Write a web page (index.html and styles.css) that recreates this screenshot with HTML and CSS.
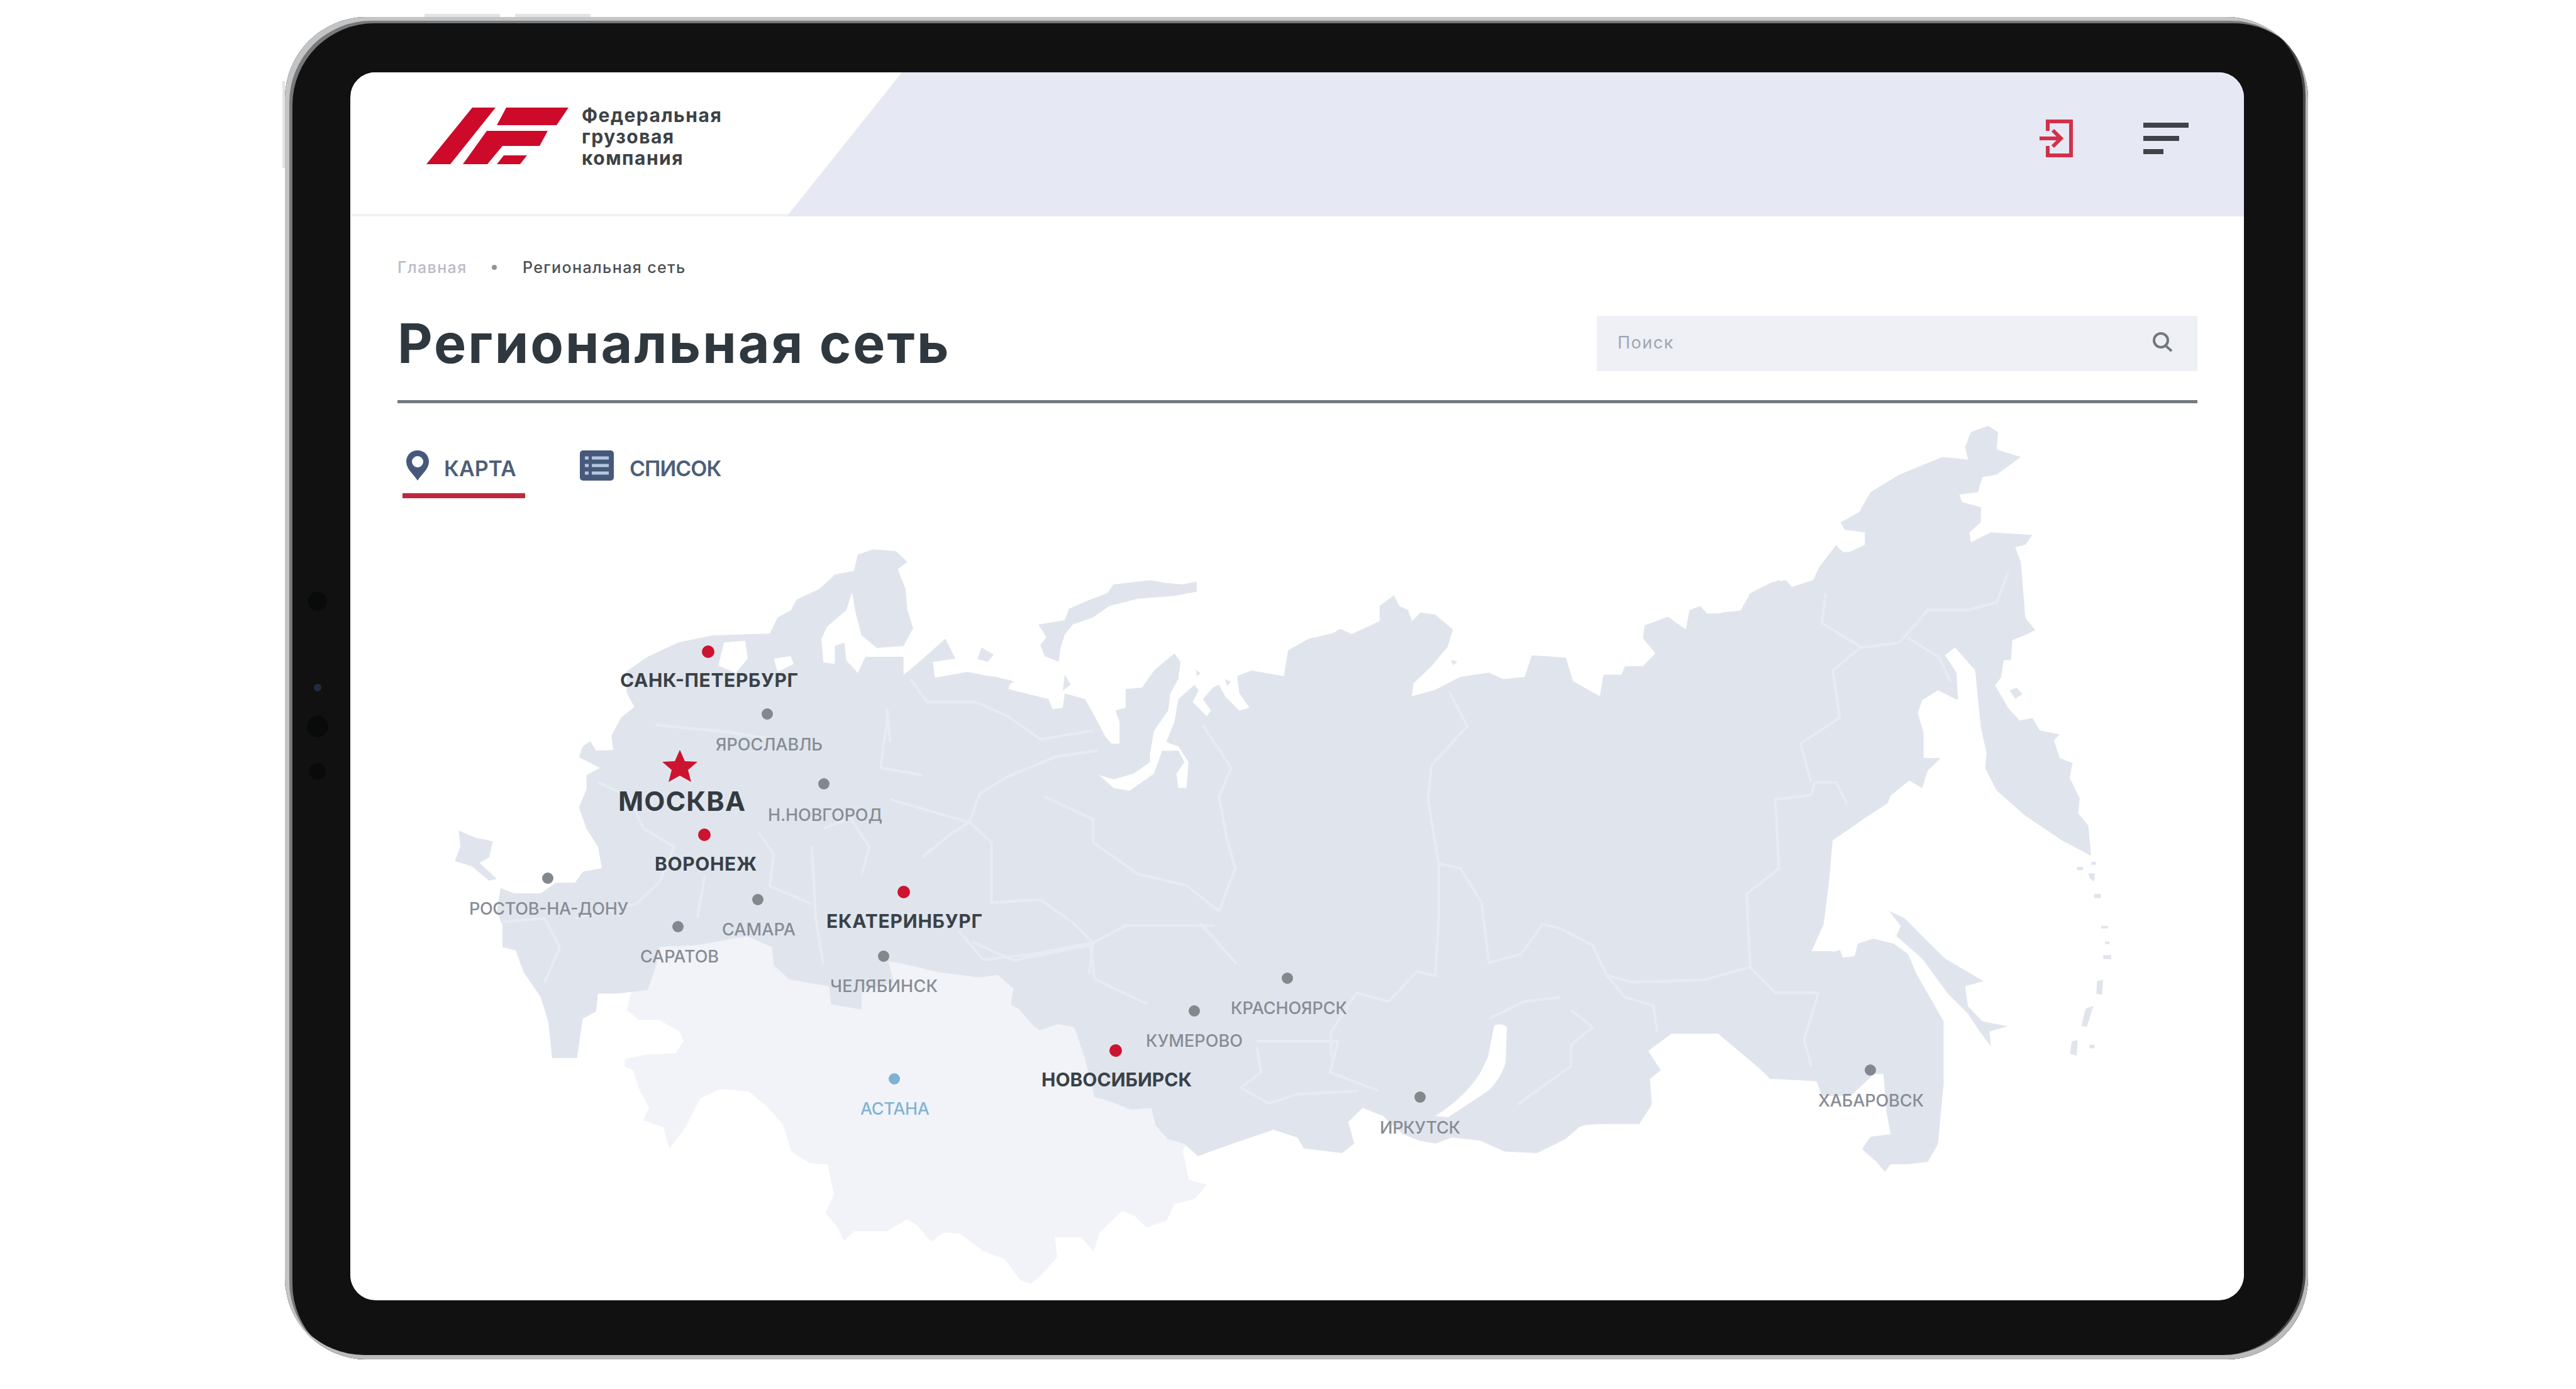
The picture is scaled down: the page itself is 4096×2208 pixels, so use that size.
FILE: index.html
```html
<!DOCTYPE html>
<html lang="ru">
<head>
<meta charset="utf-8">
<title>Региональная сеть</title>
<link rel="stylesheet" href="styles.css">
</head>
<body>
<div class="tablet">
  <span class="side-key side-key-left"></span>
  <span class="side-key side-key-top1"></span>
  <span class="side-key side-key-top2"></span>
  <span class="sensor sensor-a"></span>
  <span class="sensor sensor-lens"></span>
  <span class="sensor sensor-b"></span>
  <span class="sensor sensor-c"></span>
  <div class="screen">
    <header class="header">
      <div class="brand">
        <svg class="brand-mark" viewBox="0 0 226 92" width="226" height="92">
          <path d="M73 1H110L38 91H0ZM127 1H226L207 29H112ZM96 38H193L180 62H121L97 91H58ZM123 77H160L149 91H112Z"/>
        </svg>
        <div class="brand-name">Федеральная<br>грузовая<br>компания</div>
      </div>
      <div class="header-tools">
        <svg class="icon-login" viewBox="0 0 56 62" width="56" height="62">
          <path d="M15 19V4H52V58H15V43M2 31H35M23 18L36 31L23 44"/>
        </svg>
        <div class="burger"><i class="burger-l"></i><i class="burger-m"></i><i class="burger-s"></i></div>
      </div>
    </header>
    <div class="page-head">
      <nav class="crumbs"><span class="crumb-home">Главная</span><i class="crumb-dot"></i><span class="crumb-current">Региональная сеть</span></nav>
      <div class="title-row">
        <h1 class="title">Региональная сеть</h1>
        <div class="search">
          <span class="search-hint">Поиск</span>
          <svg viewBox="0 0 36 32" width="36" height="32"><path d="M24 22L33 30M27 13A11 11 0 1 1 5 13A11 11 0 1 1 27 13Z"/></svg>
        </div>
      </div>
    </div>
    <section class="map">
      <svg class="map-canvas" viewBox="558 641 3009 1427">
        <g class="neighbour" transform="matrix(.6454 0 0 .3797 952.5 1488.3)">
          <path d="M80 240L70 310 100 350 150 350 200 400 210 440 190 490 120 495 65 515 65 545 85 560 100 640 125 720 110 770 160 800 175 890 215 800 250 680 300 640 370 650 420 720 455 790 475 900 520 950 565 955 580 1080 560 1160 590 1220 605 1275 630 1235 710 1235 760 1185 785 1210 820 1280 850 1240 890 1245 950 1320 1000 1350 1040 1440 1065 1455 1090 1420 1130 1345 1125 1260 1190 1260 1220 1320 1235 1240 1290 1150 1320 1170 1350 1220 1400 1190 1420 1120 1470 1100 1500 1040 1455 1020 1440 900 1450 860 1400 500 1100 200 900 100 600 -20 130 -20Z"/>
        </g>
        <g class="land">
          <g transform="matrix(.6074 0 0 .5695 684.6 833.4)">
            <path d="M320 1490L310 1390 290 1320 245 1250 225 1190 190 1180 190 1120 175 1080 185 1015 220 1030 290 1030 330 1000 380 1000 400 970 450 960 440 900 410 850 390 790 410 740 410 700 445 680 390 650 400 620 420 605 435 632 480 630 475 590 500 540 535 510 515 470 515 410 570 370 650 330 740 310 890 305 910 260 945 240 960 210 1020 180 1060 140 1110 130 1120 85 1160 70 1220 75 1250 105 1225 125 1245 180 1250 240 1265 290 1240 340 1170 345 1130 310 1115 250 1105 190 1090 240 1040 285 1025 320 1030 385 1060 390 1060 340 1085 330 1090 380 1120 415 1140 370 1240 370 1240 420 1270 410 1300 370 1350 320 1375 375 1310 385 1310 440 1380 420 1480 425 1530 440 1500 450 1568 490 1568 1370 1520 1340 1535 1295 1500 1255 1440 1265 1330 1250 1230 1225 1200 1220 1215 1280 1130 1300 1130 1355 1050 1340 1045 1290 940 1270 900 1230 895 1180 830 1150 700 1175 600 1180 590 1240 570 1300 490 1310 440 1310 435 1360 400 1380 385 1490Z"/>
            <path d="M75 855L120 875 165 885 155 930 130 945 175 990 155 995 110 955 65 940 80 900Z"/>
            <path class="water" d="M770 330L825 325 832 375 800 415 755 395ZM900 375L945 368 952 390 910 412Z"/>
          </g>
          <g transform="matrix(.6454 0 0 .4556 1190.6 833.4)">
            <path d="M380 530L430 470 485 400 510 465 455 480 460 535 540 515 650 545 640 575 740 610 750 645 775 640 780 590 830 610 850 660 880 740 895 765 915 765 915 690 905 650 930 640 930 575 970 570 1000 510 1050 450 1065 480 1060 540 1040 590 1035 650 1000 720 990 800 990 830 950 870 900 890 865 875 900 920 940 930 1000 870 1020 790 1060 790 1075 830 1055 870 1060 920 1080 920 1085 830 1060 775 1030 760 1050 690 1060 610 1100 560 1110 580 1095 620 1130 670 1140 650 1120 610 1145 570 1160 560 1175 600 1210 650 1235 640 1210 590 1205 530 1240 510 1320 530 1330 440 1380 400 1440 380 1460 365 1490 385 1568 350 1568 1568 700 1545 350 1500 100 1500 100 600Z"/>
            <path d="M575 430L605 455 590 480 565 470ZM780 525L795 560 775 580ZM1175 540L1190 550 1180 565ZM1103 508L1115 520 1105 530ZM765 480L730 460 720 420 735 395 715 350 780 335 790 295 830 270 885 240 900 210 990 195 1030 205 1070 210 1105 200 1105 235 1050 250 960 260 890 285 850 325 800 350 780 385 770 430Z"/>
          </g>
          <g transform="matrix(.6454 0 0 .4936 1547.8 1309.7)">
            <path d="M0 495L60 485 100 530 95 570 150 650 165 665 210 645 250 655 275 750 300 880 330 890 390 920 440 915 450 970 480 1015 520 1030 555 1070 640 1030 740 985 800 1010 815 1045 910 1060 940 1030 925 960 960 915 1010 940 1060 1000 1100 1020 1140 1030 1180 1010 1250 1020 1310 1055 1390 1060 1460 1015 1500 970 1568 965 1568 0 0 0Z"/>
          </g>
          <g transform="matrix(.5695 0 0 .6834 2083.6 833.4)">
            <path d="M0 265L60 260 80 245 110 258 170 235 195 225 195 190 235 165 250 190 275 200 285 225 310 205 350 210 400 245 385 285 340 330 290 370 285 400 350 385 420 355 500 345 540 360 600 355 620 305 715 310 735 365 810 400 820 350 870 350 880 330 930 330 965 300 930 265 935 235 1000 215 1050 245 1060 200 1090 190 1110 208 1200 205 1230 160 1290 135 1330 130 1355 155 1400 145 1420 105 1470 50 1490 65 1568 60 1568 670 1500 700 1460 735 1450 830 1435 930 1400 995 1440 1000 1480 990 1490 1010 1520 1005 1540 975 1568 965 1568 1285 1510 1330 1430 1330 1415 1295 1290 1290 1240 1255 1140 1185 1010 1185 945 1225 980 1270 950 1290 955 1350 920 1395 850 1395 780 1395 740 1405 690 1440 640 1460 550 1455 540 1300 0 1300ZM395 315L412 320 400 328Z"/>
          </g>
          <g transform="matrix(.4556 0 0 .7973 2738.4 654.8)">
            <path d="M0 400L80 395 110 360 200 335 240 350 320 335 340 310 400 265 425 285 500 265 500 240 430 235 415 220 480 200 520 160 620 125 770 90 860 95 850 70 870 40 930 28 965 40 960 75 1045 90 960 125 910 130 895 160 830 165 840 180 905 190 905 220 865 240 870 260 940 240 1085 245 1060 265 1025 270 1045 300 1060 410 1095 435 1060 445 1015 455 1010 495 985 495 975 530 955 545 1000 590 1040 615 1085 610 1110 635 1180 643 1160 655 1180 690 1225 700 1215 730 1250 770 1245 800 1280 825 1290 885 1190 855 1060 805 960 755 920 710 925 680 905 630 885 515 815 470 780 485 820 520 825 575 755 555 700 575 685 600 705 640 705 690 765 690 720 715 700 750 655 735 590 765 580 780 500 810 450 830 385 855 380 900 360 1000 310 1075 390 1075 400 1090 465 1085 475 1060 530 1050 600 1060 650 1080 680 1120 720 1160 775 1215 775 1340 755 1460 720 1495 650 1500 590 1500 570 1515 540 1495 490 1470 520 1445 590 1440 575 1395 565 1320 470 1320 440 1365 370 1355 340 1335 240 1330 170 1330 100 1290 0 1240Z"/>
            <path d="M585 995L640 1010 700 1045 780 1090 915 1135 850 1145 860 1185 910 1215 1000 1225 935 1235 940 1265 900 1235 860 1200 790 1160 700 1090 610 1045 625 1025Z"/>
            <path d="M1005 555L1030 550 1050 562 1025 572ZM1240 907L1262 907 1262 914 1240 914ZM1290 897L1306 897 1306 903 1290 903ZM1280 920L1304 920 1300 936 1284 930ZM1300 961L1324 961 1324 969 1300 969ZM1325 1025L1348 1025 1348 1030 1325 1030ZM1338 1056L1354 1056 1354 1061 1338 1061ZM1332 1083L1360 1083 1360 1091 1332 1091ZM1310 1135L1332 1132 1328 1162 1308 1160ZM1270 1190L1298 1184 1275 1226 1256 1224ZM1222 1255L1242 1252 1240 1284 1216 1280ZM1284 1262L1302 1262 1302 1269 1284 1269Z"/>
          </g>
        </g>
        <path class="water" d="M2377 1630Q2390 1626 2397 1633L2395 1690Q2385 1718 2367 1734L2322 1764 2303 1776 2283 1774Q2330 1745 2355 1705L2367 1680Z"/>
        <g class="borders">
          <path transform="matrix(.6074 0 0 .5695 684.6 833.4)" d="M590 560L780 580 900 600M860 860L900 920 890 1010 1000 1060M560 850L640 900 600 1000 540 1060 380 1100M720 980L700 1100M1000 900L1010 1100 1030 1230M1200 520L1180 680 1290 700M190 1110L300 1100 340 1180 300 1280M440 720L520 760 560 850M1030 850L1100 820 1150 900 1130 980"/>
          <path transform="matrix(.6454 0 0 .4556 1190.6 833.4)" d="M400 540L440 620 560 620 640 670 720 750 850 720M860 790L760 810 640 880 570 940 545 1040 500 1080 430 1160M350 960L545 1040 600 1110 600 1320 720 1310 800 1390 850 1460 930 1400 1150 1400M730 950L850 1030 850 1110 960 1220 1080 1260 1160 1350M1120 700L1190 850 1160 950 1180 1100 1200 1200 1160 1350M340 640L350 760M520 1420L580 1520 700 1500 850 1460 840 1568"/>
          <path transform="matrix(.6454 0 0 .4936 1547.8 1309.7)" d="M0 380L100 440 290 390 300 500 430 580M560 320L650 450M700 720L710 800 660 850 730 900 800 870 950 860M700 700L900 700 880 800 1000 860"/>
          <path transform="matrix(.5695 0 0 .6834 2083.6 833.4)" d="M390 390L440 470 340 560 330 640 360 790 420 800 480 880 500 1020 590 1000 650 930 700 940 790 980 830 1050 900 1065 1100 1060 1230 1030 1220 860 1310 800 1300 640 1400 630 1410 600 1470 600 1500 650M1400 600L1370 510 1480 450 1460 340 1540 285 1430 230 1440 160M360 790L360 920 350 1050 300 1040 220 1110 130 1090 60 1180 60 1240M500 1150L600 1110 700 1100M730 1130L790 1170 730 1210 730 1260 580 1350M830 1050L880 1100 960 1120 970 1180M1230 1030L1300 1090 1420 1090 1380 1200 1400 1260"/>
          <path transform="matrix(.4556 0 0 .7973 2738.4 654.8)" d="M400 440L490 470 620 460 720 395 860 395 960 380 1000 320M650 450L760 490 800 540"/>
        </g>
        <g class="dots dots-main">
          <circle cx="1127" cy="1036" r="10"/><circle cx="1121" cy="1327" r="10"/><circle cx="1438" cy="1418" r="10"/><circle cx="1775" cy="1670" r="10"/>
          <path d="M1082 1192L1090 1210 1110 1211 1095 1224 1100 1243 1082 1233 1064 1243 1069 1224 1054 1211 1074 1210Z"/>
        </g>
        <g class="dots dots-minor">
          <circle cx="1221" cy="1135" r="9"/><circle cx="1311" cy="1246" r="9"/><circle cx="872" cy="1396" r="9"/><circle cx="1206" cy="1430" r="9"/><circle cx="1079" cy="1473" r="9"/><circle cx="1406" cy="1520" r="9"/><circle cx="1900" cy="1607" r="9"/><circle cx="2048" cy="1555" r="9"/><circle cx="2259" cy="1744" r="9"/><circle cx="2975" cy="1701" r="9"/>
        </g>
        <circle class="dot-foreign" cx="1423" cy="1715" r="9"/>
        <g class="city city-main">
          <text x="987" y="1092" textLength="283">САНК-ПЕТЕРБУРГ</text>
          <text x="1042" y="1384" textLength="162">ВОРОНЕЖ</text>
          <text x="1315" y="1475" textLength="248">ЕКАТЕРИНБУРГ</text>
          <text x="1657" y="1727" textLength="239">НОВОСИБИРСК</text>
        </g>
        <text class="city city-capital" x="984" y="1289" textLength="202">МОСКВА</text>
        <g class="city city-minor">
          <text x="1139" y="1193" textLength="170">ЯРОСЛАВЛЬ</text>
          <text x="1222" y="1305" textLength="182">Н.НОВГОРОД</text>
          <text x="747" y="1454" textLength="253">РОСТОВ-НА-ДОНУ</text>
          <text x="1149" y="1487" textLength="117">САМАРА</text>
          <text x="1019" y="1530" textLength="125">САРАТОВ</text>
          <text x="1321" y="1577" textLength="171">ЧЕЛЯБИНСК</text>
          <text x="1823" y="1664" textLength="154">КУМЕРОВО</text>
          <text x="1958" y="1612" textLength="185">КРАСНОЯРСК</text>
          <text x="2195" y="1802" textLength="128">ИРКУТСК</text>
          <text x="2892" y="1759" textLength="168">ХАБАРОВСК</text>
        </g>
        <text class="city city-foreign" x="1369" y="1772" textLength="110">АСТАНА</text>
      </svg>
      <div class="tabs">
        <div class="tab tab-active">
          <svg viewBox="0 0 40 48" width="40" height="48"><path fill-rule="evenodd" d="M20 0C31 0 38 8 38 18C38 30 26 38 20 48C14 38 2 30 2 18C2 8 9 0 20 0ZM20 9A9 9 0 1 0 20 27A9 9 0 1 0 20 9Z"/></svg>
          <span class="tab-label">КАРТА</span>
        </div>
        <div class="tab tab-list">
          <svg viewBox="0 0 54 48" width="54" height="48"><rect width="54" height="48" rx="5"/><path class="rows" d="M8 12H14M19 12H46M8 24H14M19 24H46M8 36H14M19 36H46"/></svg>
          <span class="tab-label">СПИСОК</span>
        </div>
      </div>
    </section>
  </div>
</div>
</body>
</html>
```
FILE: styles.css
```css
* { box-sizing: border-box; }
body {
  margin: 0;
  width: 4096px;
  height: 2208px;
  overflow: hidden;
  background: #fff;
  font-family: Inter, "Liberation Sans", sans-serif;
  color: #2f383e;
}
.tablet {
  position: relative;
  width: 3217px;
  height: 2134px;
  margin: 27px 0 0 453px;
  padding: 88px 102px 94px 104px;
  border-radius: 130px;
  background: #111;
  box-shadow: inset 7px 6px 0 #c2c4c6, inset -4px -7px 0 #b9bbbd, inset 12px 10px 0 #77797b, inset -8px -7px 0 #4a4a4a;
}
.side-key { position: absolute; background: #e2e4e6; }
.side-key-left { left: -4px; top: 102px; width: 4px; height: 138px; }
.side-key-top1 { left: 222px; top: -5px; width: 120px; height: 5px; }
.side-key-top2 { left: 366px; top: -5px; width: 120px; height: 5px; }
.sensor { position: absolute; border-radius: 50%; background: #090a0a; }
.sensor-a { left: 37px; top: 914px; width: 30px; height: 30px; }
.sensor-lens { left: 46px; top: 1060px; width: 12px; height: 12px; background: #232a44; }
.sensor-b { left: 35px; top: 1111px; width: 34px; height: 34px; }
.sensor-c { left: 39px; top: 1186px; width: 26px; height: 26px; }

.screen {
  height: 1952px;
  padding-left: 1px;
  overflow: hidden;
  border-radius: 40px;
  background: #fff;
}
.header {
  display: flex;
  justify-content: space-between;
  height: 229px;
  background: #e6e9f3;
}
.brand {
  display: flex;
  gap: 21px;
  width: 876px;
  height: 229px;
  padding: 55px 0 0 120px;
  border-bottom: 4px solid #f3f3f5;
  background: #fff;
  clip-path: polygon(0 0, 100% 0, 693px 100%, 0 100%);
}
.brand-mark { fill: #ce0a2b; }
.brand-name {
  margin-top: -4px;
  font-size: 30px;
  font-weight: 700;
  line-height: 34px;
  letter-spacing: 1.5px;
  color: #3d4245;
}
.header-tools {
  display: flex;
  align-items: flex-start;
  gap: 111px;
  padding: 74px 88px 0 0;
}
.icon-login { fill: none; stroke: #d3304c; stroke-width: 6; }
.burger { display: grid; gap: 13px; width: 72px; padding-top: 6px; }
.burger i { height: 8px; background: #3f444b; }
.burger-l { width: 72px; }
.burger-m { width: 57px; }
.burger-s { width: 32px; }

.page-head { padding: 66px 74px 0; }
.crumbs {
  display: flex;
  align-items: center;
  height: 30px;
  font-size: 25px;
  font-weight: 500;
  letter-spacing: 1.4px;
}
.crumb-home { width: 150px; color: #b9bcc6; }
.crumb-dot { width: 8px; height: 8px; margin-right: 41px; border-radius: 50%; background: #8f9398; }
.crumb-current { color: #4a4f53; }
.title-row {
  display: flex;
  align-items: center;
  justify-content: space-between;
  height: 201px;
  padding: 62px 0 46px;
  border-bottom: 5px solid #727a7d;
}
.title {
  margin: 0;
  font-size: 86px;
  font-weight: 700;
  line-height: 88px;
  letter-spacing: 3px;
}
.search {
  display: flex;
  align-items: center;
  justify-content: space-between;
  width: 955px;
  height: 88px;
  padding: 0 38px 4px 33px;
  background: #eef0f6;
}
.search-hint { font-size: 27px; letter-spacing: 1.5px; color: #a0a6b1; }
.search svg { fill: none; stroke: #72777e; stroke-width: 4; }

.map { position: relative; height: 1427px; margin-left: -1px; }
.map-canvas { position: absolute; inset: 0; width: 3009px; height: 1427px; }
.neighbour { fill: #f2f3f8; }
.land { fill: #e0e5ed; }
.water { fill: #fff; }
.borders path {
  fill: none;
  stroke: #e7ebf2;
  stroke-width: 4;
  stroke-linejoin: round;
  vector-effect: non-scaling-stroke;
}
.dots-main { fill: #cc1430; }
.dots-minor { fill: #83888d; }
.dot-foreign { fill: #7fb2d0; }
.city-main { font-size: 30px; font-weight: 700; fill: #3a4147; }
.city-capital { font-size: 43px; font-weight: 700; fill: #343b41; }
.city-minor { font-size: 27px; font-weight: 500; fill: #878c94; }
.city-foreign { font-size: 27px; font-weight: 500; fill: #82b4d4; }

.tabs { position: relative; display: flex; gap: 84px; padding: 71px 0 0 83px; }
.tab {
  display: flex;
  align-items: center;
  height: 80px;
  padding: 0 0 16px;
  border-bottom: 8px solid transparent;
  font-size: 34px;
  font-weight: 600;
  color: #4d5f78;
  fill: #46597a;
}
.tab-label { padding-top: 8px; }
.tab-active { width: 195px; padding-left: 4px; gap: 22px; border-color: #c0283f; }
.tab-list { gap: 25px; padding-left: 3px; letter-spacing: -1px; }
.rows { stroke: #b4c6e0; stroke-width: 5; }
```
